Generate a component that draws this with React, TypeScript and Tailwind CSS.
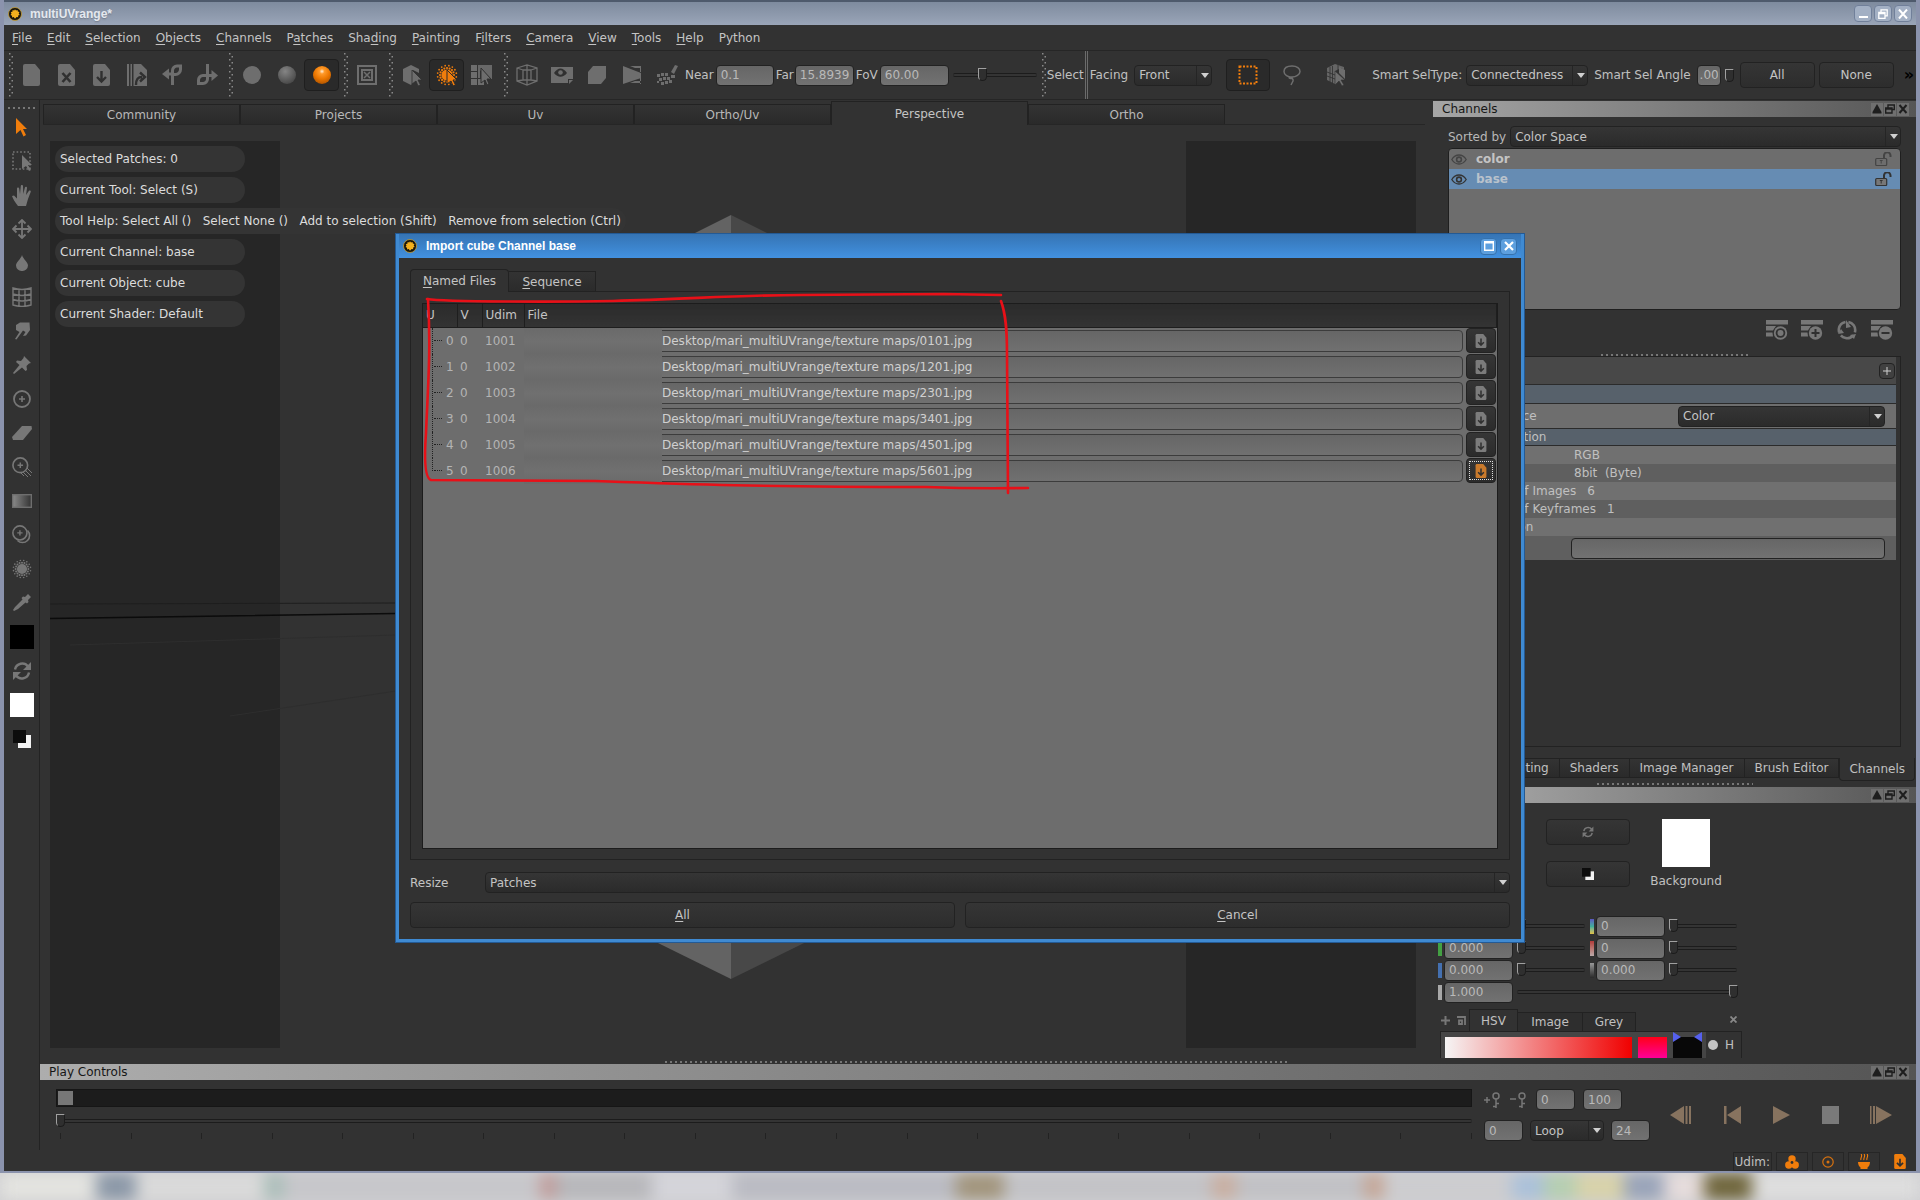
import React from "react";

type Kids = { children?: React.ReactNode };

/* ---------- small building blocks ---------- */

function Ico({ w = 22, h = 22, box = "0 0 22 22", children }: Kids & { w?: number; h?: number; box?: string }) {
  return (
    <svg width={w} height={h} viewBox={box} fill="currentColor" className="shrink-0" aria-hidden="true">
      {children}
    </svg>
  );
}

function Mn({ t, i = 0 }: { t: string; i?: number }) {
  return (
    <span>
      {t.slice(0, i)}
      <u className="underline-offset-2">{t[i]}</u>
      {t.slice(i + 1)}
    </span>
  );
}

function AppMark() {
  return (
    <svg width="14" height="14" viewBox="0 0 14 14" className="shrink-0" aria-hidden="true">
      <circle cx="7" cy="7" r="6.5" fill="#15130c" stroke="#c9a032" strokeWidth="0.8" />
      <path
        d="M7 2.2l1 1.4 1.6-.6.2 1.6 1.7.4-.8 1.5 1 1.4-1.6.7.1 1.7-1.6-.2L7 11.700l-1.300-1.600-1.700.3.100-1.700-1.600-.8 1-1.400-.8-1.500 1.700-.3.200-1.700 1.600.6z"
        fill="#f2b01e"
      />
    </svg>
  );
}

function VGrip() {
  return (
    <svg width="6" height="46" className="shrink-0" aria-hidden="true">
      <defs>
        <pattern id="vgrip" width="6" height="6" patternUnits="userSpaceOnUse">
          <rect x="1" y="1" width="1.500" height="1.500" fill="#8a8a8a" />
          <rect x="3.500" y="4" width="1.500" height="1.500" fill="#8a8a8a" />
        </pattern>
      </defs>
      <rect width="6" height="46" fill="url(#vgrip)" />
    </svg>
  );
}

function Dots({ className }: { className: string }) {
  return <div className={"h-[2px] bg-[repeating-linear-gradient(90deg,#777_0_2px,transparent_2px_5px)] " + className} />;
}

function ToolBtn({ on, label, wide, children }: Kids & { on?: boolean; label: string; wide?: boolean }) {
  return (
    <button
      aria-label={label}
      className={
        "flex h-8 shrink-0 items-center justify-center rounded-sm " +
        (wide ? "w-11 " : "w-[35px] ") +
        (on ? "border border-[#1f1f1f] bg-[#2a2a2a] text-[#f07d0c]" : "text-[#6e6e6e]")
      }
    >
      {children}
    </button>
  );
}

function Field({ value, label, className }: { value: string; label: string; className: string }) {
  return (
    <input
      aria-label={label}
      defaultValue={value}
      className={
        "h-[21px] min-w-0 shrink-0 rounded-sm border border-[#222] bg-linear-to-b from-[#666] to-[#727272] px-1 text-xs text-[#b9b9b9] outline-none " +
        className
      }
    />
  );
}

function Combo({ value, label, className }: { value: string; label: string; className: string }) {
  return (
    <div className={"relative h-[21px] min-w-0 " + className}>
      <select
        aria-label={label}
        className="block h-full w-full appearance-none rounded-sm border border-[#222] bg-linear-to-b from-[#353535] to-[#2b2b2b] pr-4 pl-1 text-xs text-[#c4c4c4] outline-none"
      >
        <option>{value}</option>
      </select>
      <div className="pointer-events-none absolute inset-y-px right-0 flex w-4 items-center justify-center border-l border-[#252525]">
        <svg width="8" height="5" viewBox="0 0 8 5" aria-hidden="true">
          <path d="M0 0h8L4 5z" fill="#d0d0d0" />
        </svg>
      </div>
    </div>
  );
}

function Slider({ value, label, className }: { value: number; label: string; className: string }) {
  return (
    <input
      type="range"
      aria-label={label}
      defaultValue={value}
      className={
        "h-4 min-w-0 appearance-none bg-transparent outline-none [&::-webkit-slider-runnable-track]:h-[4px] [&::-webkit-slider-runnable-track]:rounded-sm [&::-webkit-slider-runnable-track]:border-y [&::-webkit-slider-runnable-track]:border-[#1c1c1c] [&::-webkit-slider-runnable-track]:bg-[#343434] [&::-webkit-slider-thumb]:-mt-[6px] [&::-webkit-slider-thumb]:h-[13px] [&::-webkit-slider-thumb]:w-[9px] [&::-webkit-slider-thumb]:appearance-none [&::-webkit-slider-thumb]:rounded-b-full [&::-webkit-slider-thumb]:border [&::-webkit-slider-thumb]:border-[#1c1c1c] [&::-webkit-slider-thumb]:border-t-[#a0a0a0] [&::-webkit-slider-thumb]:border-l-[#a0a0a0] [&::-webkit-slider-thumb]:bg-[#2f2f2f] " +
        className
      }
    />
  );
}

function DarkBtn({ className, label, children }: Kids & { className: string; label?: string }) {
  return (
    <button
      aria-label={label}
      className={
        "flex items-center justify-center rounded-sm border border-[#222] bg-linear-to-b from-[#353535] to-[#2d2d2d] text-xs text-[#c4c4c4] " +
        className
      }
    >
      {children}
    </button>
  );
}

function DockBar({ title, tone }: { title: string; tone: string }) {
  return (
    <div className={"flex h-4 shrink-0 items-center justify-between pr-[7px] pl-[9px] text-xs text-[#161616] " + tone}>
      <span>{title}</span>
      <div className="flex gap-px text-[#1e1e1e]">
        <button aria-label="Collapse" className="flex h-[13px] w-3 items-center justify-center bg-[#6f6f6f]">
          <svg width="10" height="10" viewBox="0 0 10 10" fill="currentColor"><path d="M5 0l4.500 8v1.500h-9V8z" /></svg>
        </button>
        <button aria-label="Float" className="flex h-[13px] w-3 items-center justify-center bg-[#6f6f6f]">
          <svg width="10" height="10" viewBox="0 0 10 10" fill="none" stroke="currentColor" strokeWidth="1.400">
            <path d="M3 3.500V1h6.300v4.500H7.500M.7 4h6.300v5H.7zM.7 5h6.300" />
          </svg>
        </button>
        <button aria-label="Close" className="flex h-[13px] w-3 items-center justify-center bg-[#6f6f6f]">
          <svg width="10" height="10" viewBox="0 0 10 10" fill="none" stroke="currentColor" strokeWidth="2"><path d="M1.500 1l7 8M8.500 1l-7 8" /></svg>
        </button>
      </div>
    </div>
  );
}

/* ---------- icons ---------- */

const page = "M2 0h10l5 6v14a2 2 0 0 1-2 2H2a2 2 0 0 1-2-2V2a2 2 0 0 1 2-2z";

function PageIcon({ mark, w = 17, h = 22 }: { mark?: "x" | "down"; w?: number; h?: number }) {
  return (
    <Ico w={w} h={h} box="0 0 17 22">
      <path d={page} />
      {mark === "x" && <path d="M4.500 9l8 9M12.500 9l-8 9" stroke="#303030" strokeWidth="2.600" />}
      {mark === "down" && <path d="M8.500 7v10M4 13l4.500 4.500L13 13" stroke="#303030" strokeWidth="2.400" fill="none" />}
    </Ico>
  );
}

function SwapIcon({ s = 20 }: { s?: number }) {
  return (
    <Ico w={s} h={s} box="0 0 20 20">
      <path d="M3 8.500A7.300 7.300 0 0 1 16 5.500M17 11.500A7.300 7.300 0 0 1 4 14.500" fill="none" stroke="currentColor" strokeWidth="2.400" />
      <path d="M19 1v8h-8zM1 19v-8h8z" />
    </Ico>
  );
}

function MonoIcon({ s = 18 }: { s?: number }) {
  return (
    <Ico w={s} h={s} box="0 0 18 18">
      <rect x="5" y="5" width="13" height="13" fill="#f2f2f2" />
      <rect width="13" height="13" fill="#0c0c0c" />
    </Ico>
  );
}

function SplatDots({ r = 10 }: { r?: number }) {
  const dots = [];
  for (let k = 0; k < 16; k++) {
    const a = (k * Math.PI) / 8;
    dots.push(
      <g key={k}>
        <circle cx={11 + Math.cos(a) * r * 0.7} cy={11 + Math.sin(a) * r * 0.7} r="1.100" />
        <circle cx={11 + Math.cos(a + 0.2) * r * 0.95} cy={11 + Math.sin(a + 0.2) * r * 0.95} r="0.9" />
      </g>,
    );
  }
  return (
    <>
      <circle cx="11" cy="11" r={r * 0.56} />
      {dots}
    </>
  );
}

const cursor = "M11 6l10 10h-4l2.500 5-2.500 1-2-5-4 3z";

/* ---------- toolbar ---------- */

function Toolbar() {
  return (
    <div className="flex h-[50px] shrink-0 items-center overflow-hidden border-y border-[#262626] pl-1 text-xs whitespace-nowrap text-[#c0c0c0]">
      <VGrip />
      <ToolBtn label="New"><PageIcon /></ToolBtn>
      <ToolBtn label="Close project"><PageIcon mark="x" /></ToolBtn>
      <ToolBtn label="Save"><PageIcon mark="down" /></ToolBtn>
      <ToolBtn label="Export">
        <Ico w={20} h={22} box="0 0 20 22">
          <path d="M0 0h2v22H0zM3.500 0h1.500v22H3.500zM6.500 0H14l6 6v16H6.500z" />
          <path d="M9 21c0-6 2-8 6-8M13 8.500l5 4.500-5 4.500" stroke="#303030" strokeWidth="2.400" fill="none" />
        </Ico>
      </ToolBtn>
      <ToolBtn label="Import object">
        <Ico w={20} h={22} box="0 0 20 22">
          <path d="M3 10h9" stroke="currentColor" strokeWidth="3" />
          <path d="M10.500 21V6.500A4.500 4.500 0 0 1 15 2h3.500v3.500A5 5 0 0 1 13.500 10.500h-3" fill="none" stroke="currentColor" strokeWidth="3" />
          <path d="M0 10l7-5.500v11z" />
        </Ico>
      </ToolBtn>
      <ToolBtn label="Export object">
        <Ico w={22} h={22}>
          <path d="M11.500 0v15a4.500 4.500 0 0 1-4.500 4.500H2.500V16A4.500 4.500 0 0 1 7 11.500h10" fill="none" stroke="currentColor" strokeWidth="3" />
          <path d="M22 11.500L15.500 6v11z" />
        </Ico>
      </ToolBtn>
      <div className="w-1 shrink-0" />
      <VGrip />
      <ToolBtn label="Flat shading"><Ico w={18} h={18} box="0 0 18 18"><circle cx="9" cy="9" r="9" /></Ico></ToolBtn>
      <ToolBtn label="Basic shading">
        <Ico w={18} h={18} box="0 0 18 18">
          <defs>
            <radialGradient id="ballGrey" cx="0.4" cy="0.3" r="0.7"><stop offset="0" stopColor="#858585" /><stop offset="1" stopColor="#4a4a4a" /></radialGradient>
          </defs>
          <circle cx="9" cy="9" r="9" fill="url(#ballGrey)" />
        </Ico>
      </ToolBtn>
      <ToolBtn label="Full shading" on>
        <Ico w={18} h={18} box="0 0 18 18">
          <defs>
            <radialGradient id="ballHot" cx="0.5" cy="0.3" r="0.7"><stop offset="0" stopColor="#fff0dc" /><stop offset="0.2" stopColor="#ff9a2a" /><stop offset="0.6" stopColor="#ec7700" /><stop offset="1" stopColor="#b25600" /></radialGradient>
          </defs>
          <circle cx="9" cy="9" r="9" fill="url(#ballHot)" />
        </Ico>
      </ToolBtn>
      <div className="w-1 shrink-0" />
      <VGrip />
      <ToolBtn label="Frame">
        <Ico w={20} h={20} box="0 0 20 20">
          <path d="M1 1h18v18H1zM5 5h10v10H5z" fill="none" stroke="currentColor" strokeWidth="2" />
          <path d="M7 7l6 6M13 7l-6 6" stroke="currentColor" strokeWidth="1.500" />
        </Ico>
      </ToolBtn>
      <div className="w-1 shrink-0" />
      <VGrip />
      <ToolBtn label="Select object">
        <Ico>
          <path d="M10 1l8 4v4l-6-3v12l-2 3-8-4V5z" />
          <path d={cursor} stroke="#303030" strokeWidth="0.800" />
        </Ico>
      </ToolBtn>
      <ToolBtn label="Select patch" on>
        <Ico>
          <SplatDots />
          <path d={cursor} stroke="#2a2a2a" />
        </Ico>
      </ToolBtn>
      <ToolBtn label="Select face">
        <Ico>
          <path d="M0 1h6v6H0zM0 8h6v6H0zM0 15h6v6H0zM7 15h6v6H7z" />
          <path d="M7 1h14v14h-4L9 6v8H7z" opacity="0.900" />
          <path d="M10 4l10 11h-4l2 5-2 1-2-5-4 3z" stroke="#303030" />
        </Ico>
      </ToolBtn>
      <div className="w-1 shrink-0" />
      <VGrip />
      <ToolBtn label="Wireframe">
        <Ico>
          <path d="M7 6h8v10H7zM1 4l10-3 10 3v13l-10 4-10-4zM1 4l6 2M21 4l-6 2M1 17l6-1M21 17l-6-1M11 1v20" fill="none" stroke="currentColor" strokeWidth="1.300" />
        </Ico>
      </ToolBtn>
      <ToolBtn label="Visibility">
        <Ico>
          <path d="M0 3h22v12h-5v4H0z" />
          <path d="M3 9c4-6 9-6 13 0-4 5-9 5-13 0z" fill="#303030" />
          <circle cx="9.500" cy="8.500" r="2.300" />
          <path d="M18 16h4l-4 4z" />
        </Ico>
      </ToolBtn>
      <ToolBtn label="Box"><Ico w={20} h={20} box="0 0 20 20"><path d="M6 1h13v12l-5 6H1V7z" /></Ico></ToolBtn>
      <ToolBtn label="Cone">
        <Ico w={20} h={20} box="0 0 20 20">
          <path d="M1 1l18 7v5L1 19zM8 1h11v2h-6zM8 18h11v-2h-6zM18 1h1v6h-1zM18 13h1v6h-1z" />
        </Ico>
      </ToolBtn>
      <ToolBtn label="Noise">
        <Ico>
          <path d="M15 8l4-7 3 1-4 8z" />
          <path d="M1 10h3v3H1zM5 9h3v3H5zM9 9h3v3H9zM3 14h3v3H3zM7 13h3v3H7zM11 13h3v3h-3zM15 11h4v3h-4zM5 18h3v3H5zM9 17h3v3H9zM13 16h3v3h-3zM1 17h2v2H1z" />
        </Ico>
      </ToolBtn>
      <label className="flex shrink-0 items-center gap-0.5 pl-px">Near <Field label="Near" value="0.1" className="w-[58px]" /></label>
      <label className="flex shrink-0 items-center gap-px pl-0.5">Far <Field label="Far" value="15.8939" className="w-[59px]" /></label>
      <label className="flex shrink-0 items-center gap-0.5 pl-0.5">FoV <Field label="Field of view" value="60.00" className="w-[69px]" /></label>
      <Slider label="Field of view slider" value={34} className="ml-1 w-[84px] shrink-0" />
      <div className="ml-1 flex"><VGrip /></div>
      <span className="pr-px">Select</span>
      <div className="h-full w-[3px] shrink-0 border-x border-[#6b6b6b]" />
      <label className="flex shrink-0 items-center gap-1.5 pl-0.5">Facing <Combo label="Facing" value="Front" className="w-[78px]" /></label>
      <div className="w-3.5 shrink-0" />
      <ToolBtn label="Marquee" on wide>
        <Ico w={20} h={20} box="0 0 20 20"><rect x="1.500" y="1.500" width="17" height="17" fill="none" stroke="currentColor" strokeWidth="2" strokeDasharray="2 1.500" /></Ico>
      </ToolBtn>
      <ToolBtn label="Lasso" wide>
        <Ico>
          <path d="M11 2c5 0 8 2.500 8 5.500S15 13 11 13s-8-2-8-5.500S6 2 11 2zM8 12c0 3 5 1 4 5l-2 4M12 13c-1 2-4 2-4 0" fill="none" stroke="currentColor" strokeWidth="1.500" />
        </Ico>
      </ToolBtn>
      <ToolBtn label="Smart select" wide>
        <Ico>
          <path d="M2 4l8-4 9 3v3l-3-2-6 3v13L2 16z" opacity="0.850" />
          <path d="M2 8l8 3M2 12l8 3M5 3v15M7.500 2v18M13 1v8" stroke="#303030" strokeWidth="0.800" />
          <path d="M10 7l10 9h-4l3 5-2 1-3-5-4 4z" stroke="#303030" strokeWidth="0.600" />
          <path d="M14 3l6 3v9l-6-6z" />
        </Ico>
      </ToolBtn>
      <label className="ml-3.5 flex shrink-0 items-center gap-1">Smart SelType: <Combo label="Smart selection type" value="Connectedness" className="w-[122px]" /></label>
      <label className="ml-1.5 flex shrink-0 items-center gap-1.5">Smart Sel Angle <Field label="Smart selection angle" value=".00" className="w-6 !px-0.5" /></label>
      <div className="mx-1 h-[13px] w-[9px] shrink-0 rounded-b-full border border-[#1c1c1c] border-t-[#a0a0a0] border-l-[#a0a0a0] bg-[#2f2f2f]" />
      <DarkBtn className="ml-0.5 h-[26px] w-[75px] shrink-0">All</DarkBtn>
      <DarkBtn className="ml-1 h-[26px] w-[75px] shrink-0">None</DarkBtn>
      <span className="ml-auto pr-0.5 text-base font-bold text-black">»</span>
    </div>
  );
}

/* ---------- tool box ---------- */

function ToolBox() {
  const row = "flex h-[34px] w-full shrink-0 items-center justify-center text-[#777]";
  const ring = (
    <>
      <circle cx="9" cy="9" r="8" fill="none" stroke="currentColor" strokeWidth="1.800" />
      <path d="M9 6v6M6 9h6" stroke="currentColor" strokeWidth="1.600" />
    </>
  );
  return (
    <aside className="flex w-9 shrink-0 flex-col items-center border-r border-[#232323] pt-[7px]">
      <Dots className="mb-px w-7" />
      <button aria-label="Select" className={row + " !text-[#f07d0c]"}><Ico w={12} h={19} box="0 0 12 19"><path d="M0 0l11 11H7l3 6-2.500 1.500L4.500 12 0 16z" /></Ico></button>
      <button aria-label="Marquee select" className={row}>
        <Ico w={20} h={20} box="0 0 20 20">
          <rect x="1" y="1" width="17" height="17" fill="none" stroke="currentColor" strokeWidth="1.600" strokeDasharray="1.600 2" />
          <path d="M10 4l10 10h-4l3 5-2 1-3-5-4 3z" />
        </Ico>
      </button>
      <button aria-label="Pan" className={row}>
        <Ico w={20} h={21} box="0 0 20 21">
          <path d="M6 21C3 17 1 14 0 11l2-.5 3 3V3.500c0-1.500 2-1.500 2.200 0L8 9l.800-8c.200-1.400 2-1.400 2.200 0l.300 8 1.600-6.500c.4-1.400 2.200-1 2.100.4L14 10l2.800-4c1-1 2.400-.2 1.900 1L16 14l-2 7z" />
        </Ico>
      </button>
      <button aria-label="Transform" className={row}>
        <Ico w={20} h={20} box="0 0 20 20">
          <path d="M10 1v18M1 10h18" stroke="currentColor" strokeWidth="1.800" />
          <path d="M6.500 4.500L10 1l3.500 3.500M6.500 15.500L10 19l3.500-3.500M4.500 6.500L1 10l3.500 3.500M15.500 6.500L19 10l-3.500 3.500" fill="none" stroke="currentColor" strokeWidth="1.800" />
        </Ico>
      </button>
      <button aria-label="Blur" className={row}><Ico w={12} h={16} box="0 0 12 16"><path d="M6 0c1 4 6 7 6 10.500A5.700 5.700 0 0 1 6 16a5.700 5.700 0 0 1-6-5.500C0 7 5 4 6 0z" /></Ico></button>
      <button aria-label="Warp" className={row}>
        <Ico w={20} h={20} box="0 0 20 20">
          <path d="M1 1c6 2 12 2 18 0v17c-6 2-12 2-18 0zM1 7c6 2 12 2 18 0M1 12.500c6 2 12 2 18 0M7 2v17M13 2v17" fill="none" stroke="currentColor" strokeWidth="1.400" />
        </Ico>
      </button>
      <button aria-label="Smudge" className={row}>
        <Ico w={16} h={18} box="0 0 16 18"><path d="M2 3l4-2.500h9.500L16 8l-4 5.500-3 .5 2.500-4-2.500-1.500L2.500 17.500 1 17l4.500-7L2 8z" /></Ico>
      </button>
      <button aria-label="Pin" className={row}>
        <Ico w={18} h={18} box="0 0 18 18"><path d="M11 0l7 7-2 .5-2.500 2.500.5 4-1.500 1-3.500-3.500L1 18l-1-1 6.500-8L3 6l1-1.500 4 .5L10.500 2z" /></Ico>
      </button>
      <button aria-label="Clone" className={row}><Ico w={18} h={18} box="0 0 18 18">{ring}</Ico></button>
      <button aria-label="Eraser" className={row}><Ico w={20} h={14} box="0 0 20 14"><path d="M10 0h9.500l.5 3-9 11H1l-1-3z" /></Ico></button>
      <button aria-label="Towbrush" className={row}>
        <Ico w={20} h={20} box="0 0 20 20"><g transform="scale(.92)">{ring}</g><path d="M11 15l5 5M13 13l6 6M15 11l5 5M9 16l3 3" stroke="currentColor" strokeWidth="1" /></Ico>
      </button>
      <button aria-label="Gradient" className={row}>
        <Ico w={20} h={14} box="0 0 20 14">
          <defs><linearGradient id="tg"><stop offset="0" stopColor="#8a8a8a" /><stop offset="1" stopColor="#333" /></linearGradient></defs>
          <rect x="0.700" y="0.700" width="18.600" height="12.600" fill="url(#tg)" stroke="#6e6e6e" strokeWidth="1.400" />
        </Ico>
      </button>
      <button aria-label="Clone stamp" className={row}>
        <Ico w={20} h={20} box="0 0 20 20"><g transform="scale(.88)">{ring}</g><path d="M15.500 5.500a7 7 0 1 1-10 10" fill="none" stroke="currentColor" strokeWidth="1.600" /></Ico>
      </button>
      <button aria-label="Slerp" className={row}><Ico w={20} h={20}><SplatDots /></Ico></button>
      <button aria-label="Colour picker" className={row}>
        <Ico w={18} h={18} box="0 0 18 18"><path d="M12 3l3-3 3 3-3 3 .5 2-1.500 1.500-1.500-1L5 15l-4 2-1-1 2-3 7.500-7.500-1-1.500L10 2.500z" /></Ico>
      </button>
      <button aria-label="Foreground colour" className={row}><span className="size-6 bg-black" /></button>
      <button aria-label="Swap colours" className={row}><SwapIcon /></button>
      <button aria-label="Background colour" className={row}><span className="size-6 bg-white" /></button>
      <button aria-label="Reset colours" className={row}><MonoIcon /></button>
    </aside>
  );
}

/* ---------- viewport ---------- */

const viewTabs = ["Community", "Projects", "Uv", "Ortho/Uv", "Perspective", "Ortho"];
const hud = [
  "Selected Patches: 0",
  "Current Tool: Select (S)",
  "Tool Help: Select All ()   Select None ()   Add to selection (Shift)   Remove from selection (Ctrl)",
  "Current Channel: base",
  "Current Object: cube",
  "Current Shader: Default",
];

function Viewport() {
  return (
    <section className="flex min-w-0 flex-1 flex-col">
      <div className="mr-2 ml-[3px] flex h-[25px] shrink-0 items-end border-b border-[#262626]" role="tablist">
        {viewTabs.map((t) => (
          <button
            key={t}
            role="tab"
            className={
              t === "Perspective"
                ? "-mb-px h-6 w-[197px] border-x border-t border-[#222] bg-[#323232] text-xs text-[#c4c4c4]"
                : "h-5 w-[197px] border-x border-t border-[#222] bg-linear-to-b from-[#333] to-[#2a2a2a] text-xs text-[#b8b8b8]"
            }
          >
            {t}
          </button>
        ))}
      </div>
      <div className="relative mt-4 mr-[17px] mb-4 ml-[10px] flex flex-1 justify-between overflow-hidden bg-[#323232]">
        <div className="w-[230px] bg-[#262626]" />
        <div className="w-[230px] bg-[#262626]" />
        <svg className="absolute inset-0" width="100%" height="100%" aria-hidden="true">
          <path d="M0 477.500L140 475.500 346 472.500" stroke="#0b0b0b" strokeWidth="1.600" fill="none" />
          <path d="M0 463L346 462" stroke="#1e1e1e" fill="none" />
          <path d="M20 504L346 494M180 575L346 550" stroke="#2e2e2e" fill="none" />
          <path d="M681 74L541 144V769L681 838z" fill="#636363" />
          <path d="M681 74L821 144V769L681 838z" fill="#484848" />
        </svg>
        <div className="absolute top-[5px] left-[5px] flex flex-col gap-[5px]">
          {hud.map((t) => (
            <div key={t} className="flex h-[26px] min-w-[190px] items-center self-start rounded-full bg-[#343434] px-[5px] text-xs whitespace-pre text-[#dcdcdc]">
              {t}
            </div>
          ))}
        </div>
      </div>
    </section>
  );
}

/* ---------- right docks ---------- */

function Eye() {
  return (
    <Ico w={16} h={11} box="0 0 16 11">
      <path d="M.8 5.500C4.500-.5 11.500-.5 15.200 5.500 11.500 11.500 4.500 11.500.8 5.500z" fill="none" stroke="currentColor" strokeWidth="1.300" />
      <circle cx="8" cy="5.500" r="2.400" fill="none" stroke="currentColor" strokeWidth="1.600" />
    </Ico>
  );
}

function Unlock({ fill }: { fill: string }) {
  return (
    <Ico w={17} h={14} box="0 0 17 14">
      <rect x="0.700" y="6.500" width="11" height="7" rx="1" fill={fill} stroke="currentColor" strokeWidth="1.200" />
      <path d="M9 6V3.500a3 3 0 0 1 6.500 0V5" fill="none" stroke="currentColor" strokeWidth="2" />
      <path d="M6.200 8v3.500M4.800 8.500h2.800" stroke="currentColor" />
    </Ico>
  );
}

function ListIcon({ kind }: { kind: "dot" | "plus" | "minus" }) {
  return (
    <Ico w={22} h={20} box="0 0 22 20">
      <path d="M0 0h22v4.500H0zM0 6h10l-3 4.500H0zM0 12.500h6.500l.5 4H0z" />
      <circle cx="14.500" cy="13" r="7.600" fill="#323232" />
      <circle cx="14.500" cy="13" r="6.700" />
      <circle cx="14.500" cy="13" r="4.800" fill={kind === "dot" ? "#303030" : "none"} />
      {kind === "dot" && <circle cx="14.500" cy="13" r="3" />}
      {kind !== "dot" && <path d={kind === "plus" ? "M14.500 9v8M10.500 13h8" : "M10.500 13h8"} stroke="#303030" strokeWidth="2" />}
    </Ico>
  );
}

function InfoRow({ name, value, shade }: { name: string; value: string; shade: string }) {
  return (
    <div className={"flex h-[18px] items-center gap-[11px] pl-4 " + shade}>
      <span className="min-w-[98px]">{name}</span>
      <span className="whitespace-pre">{value}</span>
    </div>
  );
}

function ColorRow({ bar, value, name, wide }: { bar: string; value: string; name: string; wide?: boolean }) {
  return (
    <div className={"flex h-[22px] items-center " + (wide ? "w-[300px]" : "w-[147px]")}>
      <div className={"mr-0.5 h-[15px] w-[4px] " + bar} />
      <Field label={name} value={value} className="w-[69px]" />
      <Slider label={name + " slider"} value={wide ? 100 : 0} className="ml-1 flex-1" />
    </div>
  );
}

function RightDocks() {
  const dockTabs = ["Shaders", "Image Manager", "Brush Editor"];
  return (
    <section className="flex w-[483px] shrink-0 flex-col text-xs text-[#c0c0c0]">
      <div className="mt-px">
        <DockBar title="Channels" tone="bg-linear-to-r from-[#a6a6a6] to-[#565656]" />
      </div>
      <div className="flex min-h-0 flex-1 flex-col pt-[9px] pr-[15px] pl-[15px]">
        <label className="flex items-center gap-1 text-[#b8b8b8]">
          Sorted by <Combo label="Sorted by" value="Color Space" className="flex-1" />
        </label>
        <ul className="mt-px h-[162px] shrink-0 rounded-sm border border-[#1f1f1f] bg-[#6d6d6d] font-bold text-[#c4c4c4]">
          <li className="flex h-5 items-center pr-2 pl-0.5 text-[#444]">
            <Eye /><span className="flex-1 pl-[9px] text-[#c4c4c4]">color</span><Unlock fill="none" />
          </li>
          <li className="flex h-5 items-center bg-[#668cb3] pr-2 pl-0.5 text-[#333]">
            <Eye /><span className="flex-1 pl-[9px] text-[#b9c2cc]">base</span><Unlock fill="#777" />
          </li>
        </ul>
        <div className="mt-2.5 flex justify-end gap-[13px] pr-2 text-[#777]">
          <button aria-label="Channel settings"><ListIcon kind="dot" /></button>
          <button aria-label="Add channel"><ListIcon kind="plus" /></button>
          <button aria-label="Refresh channels">
            <Ico w={22} h={20} box="0 0 22 20">
              <circle cx="11" cy="10" r="8.200" fill="none" stroke="currentColor" strokeWidth="2.600" strokeDasharray="13.900 3.270" transform="rotate(-80 11 10)" />
              <path d="M10 0l5 7-5 1zM2 14l3-5 3 4zM20 14l-6 1 4 4z" />
            </Ico>
          </button>
          <button aria-label="Remove channel"><ListIcon kind="minus" /></button>
        </div>
        <Dots className="mt-3.5 w-[148px] self-center" />
        <div className="flex min-h-0 flex-1 flex-col border border-[#222] pr-1">
          <div className="flex h-7 shrink-0 items-center justify-end border-b border-[#2b2b2b] bg-[#484848] pr-px">
            <button aria-label="Expand" className="flex size-4 items-center justify-center rounded-sm border border-[#222] bg-[#404040]">
              <svg width="8" height="8" viewBox="0 0 8 8" stroke="#d0d0d0"><path d="M4 0v8M0 4h8" /></svg>
            </button>
          </div>
          <div className="h-[19px] shrink-0 border-b border-[#2b2b2b] bg-[#57616b]" />
          <div className="flex h-6 shrink-0 items-center bg-[#6e6e6e] pr-[11px] pl-4">
            <span className="flex-1">Color Space</span>
            <Combo label="Color Space" value="Color" className="w-[207px]" />
          </div>
          <div className="flex h-[18px] shrink-0 items-center border-y border-[#2b2b2b] bg-[#57616b] pl-7">Information</div>
          <InfoRow name="Format" value="RGB" shade="bg-[#707070]" />
          <InfoRow name="Depth" value="8bit  (Byte)" shade="bg-[#5f5f5f]" />
          <InfoRow name="Number of Images" value="6" shade="bg-[#707070]" />
          <InfoRow name="Number of Keyframes" value="1" shade="bg-[#5f5f5f]" />
          <InfoRow name="Description" value="" shade="bg-[#707070]" />
          <div className="flex h-6 shrink-0 items-center justify-end bg-[#5f5f5f] pr-[11px]">
            <Field label="Description" value="" className="w-[314px]" />
          </div>
        </div>
      </div>
      <div className="mt-[11px] flex h-[23px] shrink-0 items-start justify-end pr-px">
        <button className="h-5 border border-[#222] bg-linear-to-b from-[#333] to-[#2a2a2a] px-2.5">Painting</button>
        {dockTabs.map((t) => (
          <button key={t} className="-ml-px h-5 border border-[#222] bg-linear-to-b from-[#333] to-[#2a2a2a] px-2.5">{t}</button>
        ))}
        <button className="h-[23px] rounded-b-sm border border-t-0 border-[#222] px-[9px]">Channels</button>
      </div>
      <Dots className="my-0.5 w-[156px] self-center" />
      <DockBar title="" tone="bg-linear-to-r from-[#b0b0b0] to-[#565656]" />
      <div className="flex h-[108px] shrink-0 pt-4 pl-[113px]">
        <div className="flex flex-col gap-4">
          <DarkBtn label="Swap colours" className="h-[26px] w-[84px] !text-[#777]"><SwapIcon s={12} /></DarkBtn>
          <DarkBtn label="Reset colours" className="h-[26px] w-[84px]"><MonoIcon s={12} /></DarkBtn>
        </div>
        <div className="ml-4 flex w-20 flex-col items-center gap-1.5">
          <div className="size-12 bg-white" />
          Background
        </div>
      </div>
      <div className="flex flex-col pt-1 pl-[5px]">
        <div className="flex gap-[5px]">
          <ColorRow name="Red" bar="bg-[#b03030]" value="0.000" />
          <ColorRow name="Hue" bar="bg-linear-to-b from-[#5a55c0] via-[#3fae9a] to-[#e0c040]" value="0" />
        </div>
        <div className="flex gap-[5px]">
          <ColorRow name="Green" bar="bg-[#43a043]" value="0.000" />
          <ColorRow name="Saturation" bar="bg-linear-to-b from-[#b03a3a] to-[#b9a9a9]" value="0" />
        </div>
        <div className="flex gap-[5px]">
          <ColorRow name="Blue" bar="bg-[#4470b0]" value="0.000" />
          <ColorRow name="Value" bar="bg-linear-to-b from-[#999] to-[#2a2a2a]" value="0.000" />
        </div>
        <ColorRow name="Alpha" bar="bg-[#a8a8a8]" value="1.000" wide />
      </div>
      <div className="mt-1.5 flex h-[22px] w-[308px] shrink-0 items-end pl-2">
        <div className="flex h-full w-7 items-center gap-[7px] text-[#777]">
          <svg width="9" height="9" viewBox="0 0 9 9" stroke="currentColor" strokeWidth="2"><path d="M4.500 0v9M0 4.500h9" /></svg>
          <svg width="9" height="9" viewBox="0 0 9 9" fill="none" stroke="currentColor" strokeWidth="1.800"><path d="M0 1h8v8M2 8V4.500h3V8z" /></svg>
        </div>
        <button className="h-[22px] w-[49px] border border-b-0 border-[#222]">HSV</button>
        <button className="h-[19px] w-[65px] border border-b-0 border-l-0 border-[#222] bg-[#2e2e2e]">Image</button>
        <button className="h-[19px] w-[53px] border border-b-0 border-l-0 border-[#222] bg-[#2e2e2e]">Grey</button>
        <button aria-label="Close tab" className="mb-2 ml-auto flex pr-1 text-[#888]">
          <svg width="7" height="7" viewBox="0 0 7 7" stroke="currentColor" strokeWidth="1.800"><path d="M.5.5l6 6M6.500.5l-6 6" /></svg>
        </button>
      </div>
      <div className="mb-[6px] ml-[7px] flex h-[27px] w-[302px] shrink-0 items-end border-x border-t border-[#222]">
        <div className="flex h-full items-end gap-1.5 bg-[#454545] px-1">
          <div className="h-[21px] w-[187px] bg-linear-to-r/srgb from-[#f5f5f5] to-[#f00000]" />
          <div className="h-[21px] w-[29px] bg-linear-to-b/srgb from-[#ff0018] to-[#ff0098]" />
          <svg width="29" height="26" viewBox="0 0 29 26" aria-hidden="true">
            <path d="M0 5h29v21H0z" fill="#080808" />
            <path d="M0 0l8 5-8 5zM29 0l-8 5 8 5z" fill="#5560ee" />
          </svg>
        </div>
        <label className="flex flex-1 items-center self-center pl-0.5">
          <input type="radio" defaultChecked className="size-[10px] appearance-none rounded-full bg-[#c4c4c4]" />
          <span className="pl-[7px]">H</span>
        </label>
      </div>
    </section>
  );
}

/* ---------- play controls ---------- */

function PlayControls() {
  const ticks = Array.from({ length: 21 }, (_, i) => i);
  return (
    <section className="shrink-0 text-xs text-[#c0c0c0]">
      <DockBar title="Play Controls" tone="bg-linear-to-r from-[#adadad] to-[#555]" />
      <div className="flex h-[70px] pt-[9px] pl-4">
        <div className="min-w-0 flex-1">
          <div className="h-[18px] border border-[#161616] bg-[#1c1c1c] p-px">
            <div className="h-full w-[15px] bg-[#777]" />
          </div>
          <Slider label="Timeline" value={0} className="mt-1.5 block w-full" />
          <div className="mt-1 ml-1 flex justify-between">
            {ticks.map((i) => (<div key={i} className="h-1.5 w-px bg-[#222]" />))}
          </div>
        </div>
        <div className="ml-3 w-[166px]">
          <div className="flex items-center">
            <div className="flex w-[52px] gap-[10px] text-[#777]">
              <button aria-label="Add key"><Ico w={16} h={16} box="0 0 16 16"><path d="M0 8h6M3 5v6M12 7v9M12 14.500h-3M12 11.500h3" stroke="currentColor" strokeWidth="1.500" /><circle cx="12" cy="4" r="3" fill="none" stroke="currentColor" strokeWidth="1.500" /></Ico></button>
              <button aria-label="Remove key"><Ico w={16} h={16} box="0 0 16 16"><path d="M0 7h6M12 7v9M12 14.500h-3M12 11.500h3" stroke="currentColor" strokeWidth="1.500" /><circle cx="12" cy="4" r="3" fill="none" stroke="currentColor" strokeWidth="1.500" /></Ico></button>
            </div>
            <Field label="Start frame" value="0" className="w-[39px]" />
            <Field label="End frame" value="100" className="ml-2 w-[39px]" />
          </div>
          <div className="mt-2.5 flex justify-between">
            <Field label="Current frame" value="0" className="w-[39px]" />
            <Combo label="Playback mode" value="Loop" className="w-[74px]" />
            <Field label="Frame rate" value="24" className="w-[39px]" />
          </div>
        </div>
        <div className="mt-[15px] mr-6 ml-5 flex h-[22px] w-[222px] justify-between text-[#87735f]">
          <button aria-label="Step back"><Ico w={22} h={18} box="0 0 22 18"><path d="M0 9L14 0v18zM15.500 0h2v18h-2zM19 0h2v18h-2z" /></Ico></button>
          <button aria-label="To start"><Ico w={18} h={18} box="0 0 18 18"><path d="M0 0h2.500v18H0zM3 9L17 0v18z" /></Ico></button>
          <button aria-label="Play"><Ico w={17} h={18} box="0 0 17 18"><path d="M0 0l17 9-17 9z" /></Ico></button>
          <button aria-label="Stop" className="text-[#7a7a7a]"><Ico w={17} h={18} box="0 0 17 18"><path d="M0 0h17v18H0z" /></Ico></button>
          <button aria-label="Step forward"><Ico w={22} h={18} box="0 0 22 18"><path d="M0 0h1.500v18H0zM3 0h2v18H3zM6 0l16 9-16 9z" /></Ico></button>
        </div>
      </div>
    </section>
  );
}

function StatusBar() {
  const cell = "flex h-[19px] items-center justify-center border border-[#262626]";
  return (
    <footer className="flex h-[21px] shrink-0 items-end justify-end gap-1 text-xs text-[#c0c0c0]">
      <span className={cell + " px-px"}>Udim:</span>
      <button aria-label="Scene status" className={cell + " w-8 text-[#f07d0c]"}>
        <Ico w={14} h={14} box="0 0 14 14"><circle cx="7" cy="4" r="3.700" /><circle cx="3.800" cy="10" r="3.700" /><circle cx="10.200" cy="10" r="3.700" /><circle cx="7" cy="7.500" r="1.400" fill="#2f2f2f" /></Ico>
      </button>
      <button aria-label="Target status" className={cell + " w-8 text-[#d8720f]"}>
        <Ico w={12} h={12} box="0 0 12 12"><circle cx="6" cy="6" r="5.200" fill="none" stroke="currentColor" strokeWidth="1.200" /><circle cx="6" cy="6" r="1.500" /></Ico>
      </button>
      <button aria-label="Bake status" className={cell + " w-8 text-[#f07d0c]"}>
        <Ico w={14} h={15} box="0 0 14 15"><path d="M1 8h12c0 3-1.500 5-2.500 5.500V15h-7v-1.500C2.500 13 1 11 1 8z" /><path d="M4 0c2 2-1 4 0 6M7 0c2 2-1 4 0 6M10 0c2 2-1 4 0 6" fill="none" stroke="currentColor" strokeWidth="1.100" /></Ico>
      </button>
      <button aria-label="Save status" className="flex h-[19px] w-8 items-center justify-center text-[#f07d0c]"><PageIcon mark="down" w={12} h={15} /></button>
    </footer>
  );
}

/* ---------- import dialog ---------- */

const files = [
  ["0", "0", "1001", "0101"],
  ["1", "0", "1002", "1201"],
  ["2", "0", "1003", "2301"],
  ["3", "0", "1004", "3401"],
  ["4", "0", "1005", "4501"],
  ["5", "0", "1006", "5601"],
];

function ImportDialog() {
  const th = "h-[23px] border-r border-b border-[#1e1e1e] bg-linear-to-b from-[#2b2b2b] to-[#333] text-left font-normal text-[#c4c4c4]";
  return (
    <div
      role="dialog"
      aria-label="Import cube Channel base"
      className="absolute top-[234px] right-[396px] bottom-[258px] left-[396px] flex flex-col border-[3px] border-t-0 border-[#3f8ad2] bg-[#323232] text-xs text-[#c4c4c4] outline outline-[#245a94]"
    >
      <div className="flex h-6 shrink-0 items-center bg-linear-to-b from-[#3574b4] to-[#4291e0] pr-1 pl-[4px] font-bold text-white">
        <AppMark />
        <span className="flex-1 pl-[9px] font-['Liberation_Sans',sans-serif]">Import cube Channel base</span>
        <button aria-label="Maximise" className="mr-[3px] flex size-[17px] items-center justify-center rounded-sm border border-[#3572ae] bg-[#5d9fde]">
          <svg width="10" height="10" viewBox="0 0 10 10" fill="none" stroke="#fff" strokeWidth="1.400"><path d="M.7.7h8.600v8.600H.7zM.7 1.800h8.600" /></svg>
        </button>
        <button aria-label="Close" className="flex size-[17px] items-center justify-center rounded-sm border border-[#3572ae] bg-[#5d9fde]">
          <svg width="10" height="10" viewBox="0 0 10 10" fill="none" stroke="#fff" strokeWidth="2.200"><path d="M1 1l8 8M9 1L1 9" /></svg>
        </button>
      </div>
      <div className="flex min-h-0 flex-1 flex-col px-[11px] pt-[11px] pb-[11px]">
        <div className="flex items-end" role="tablist">
          <button role="tab" className="z-10 -mb-px h-[23px] w-[99px] rounded-t-sm border border-b-0 border-[#222] bg-[#323232] text-[#c4c4c4]"><Mn t="Named Files" /></button>
          <button role="tab" className="h-5 w-[87px] border border-b-0 border-l-0 border-[#222] bg-linear-to-b from-[#333] to-[#2b2b2b]"><Mn t="Sequence" /></button>
        </div>
        <div className="flex min-h-0 flex-1 flex-col border border-[#222] px-[11px] pt-[11px] pb-2.5">
          <div className="min-h-0 flex-1 overflow-hidden border border-[#1c1c1c] bg-[#6d6d6d]">
            <table className="w-full table-fixed border-collapse">
              <colgroup>
                <col className="w-[34px]" />
                <col className="w-[25px]" />
                <col className="w-[42px]" />
                <col />
                <col className="w-[31px]" />
              </colgroup>
              <thead>
                <tr>
                  <th className={th + " pl-[3px]"}>U</th>
                  <th className={th + " pl-[3px]"}>V</th>
                  <th className={th + " pl-[3px]"}>Udim</th>
                  <th className={th + " pl-[3px]"} colSpan={2}>File</th>
                </tr>
              </thead>
              <tbody className="text-[#b4b4b4]">
                {files.map(([u, v, udim, name], i) => (
                  <tr key={u} className="h-[26px]">
                    <td className="p-0">
                      <div className="flex h-[26px] items-center gap-px pl-[9px]">
                        <div className={"self-start border-l border-dotted border-[#222] " + (i === files.length - 1 ? "h-[13px]" : "h-[26px]")} />
                        <div className="w-2 border-t border-dotted border-[#222]" />
                        <span className="pl-[3px]">{u}</span>
                      </div>
                    </td>
                    <td className="py-0 pl-[3px]">{v}</td>
                    <td className="py-0 pl-[3px]">{udim}</td>
                    <td className="relative p-0 pr-[3px]">
                      <input
                        aria-label={"File for UDIM " + udim}
                        defaultValue={"Desktop/mari_multiUVrange/texture maps/" + name + ".jpg"}
                        className="block h-[22px] w-full rounded-sm border border-[#3c3c3c] bg-linear-to-b from-[#666] to-[#707070] pr-2 pl-[137px] text-[#d0d0d0] outline-none"
                      />
                      <div className="absolute inset-y-0 left-0 w-[138px] bg-linear-to-b from-[#6a6a6a] via-[#707070] to-[#6a6a6a]" />
                    </td>
                    <td className="p-0">
                      <button
                        aria-label={"Browse for " + udim}
                        className={
                          "flex h-[25px] w-[30px] items-center justify-center rounded-sm border border-[#222] bg-linear-to-b from-[#363636] to-[#2b2b2b] p-[2px] " +
                          (i === 5 ? "text-[#c97a2c]" : "text-[#7c7c7c]")
                        }
                      >
                        <span className={"flex size-full items-center justify-center " + (i === 5 ? "border border-dotted border-[#ddd]" : "")}>
                          <PageIcon mark="down" w={12} h={14} />
                        </span>
                      </button>
                    </td>
                  </tr>
                ))}
              </tbody>
            </table>
          </div>
        </div>
        <label className="mt-3 flex shrink-0 items-center">
          <span className="w-[75px]">Resize</span>
          <Combo label="Resize" value="Patches" className="flex-1" />
        </label>
        <div className="mt-[9px] flex shrink-0 gap-[10px]">
          <DarkBtn className="h-[26px] flex-1"><Mn t="All" /></DarkBtn>
          <DarkBtn className="h-[26px] flex-1"><Mn t="Cancel" /></DarkBtn>
        </div>
      </div>
    </div>
  );
}

/* ---------- window ---------- */

const menus: [string, number][] = [
  ["File", 0], ["Edit", 0], ["Selection", 0], ["Objects", 0], ["Channels", 0], ["Patches", 1], ["Shading", 3],
  ["Painting", 0], ["Filters", 1], ["Camera", 0], ["View", 0], ["Tools", 0], ["Help", 0], ["Python", -1],
];

export default function App() {
  const win = "flex h-[17px] w-[18px] items-center justify-center rounded-sm border border-[#71809a] bg-[#a3b0c4]";
  return (
    <div className="relative flex h-screen min-h-[900px] flex-col overflow-hidden bg-[#cfcfd2] font-['DejaVu_Sans',sans-serif]">
      <div className="flex min-h-0 flex-1 flex-col border-x-4 border-b-2 border-[#8b93ad] bg-[#323232]">
        <div className="flex h-[25px] shrink-0 items-center border-t-2 border-[#4e5a6c] bg-linear-to-b from-[#7e8b9e] to-[#9aa5b8] pr-1 pl-1">
          <AppMark />
          <span className="flex-1 pl-2 font-['Liberation_Sans',sans-serif] text-xs font-bold text-[#e4e8ee] text-shadow-sm">multiUVrange*</span>
          <div className="flex gap-0.5">
            <button aria-label="Minimise" className={win}><svg width="9" height="9" viewBox="0 0 9 9" stroke="#fff" strokeWidth="2"><path d="M0 8h9" /></svg></button>
            <button aria-label="Restore" className={win}><svg width="10" height="10" viewBox="0 0 10 10" fill="none" stroke="#fff" strokeWidth="1.300"><path d="M3 3V.8h6.200v6H7M.8 3.300H7v6H.8zM.8 4.500H7" /></svg></button>
            <button aria-label="Close" className={win}><svg width="10" height="10" viewBox="0 0 10 10" stroke="#fff" strokeWidth="2"><path d="M1 0.500l8 9M9 .5l-8 9" /></svg></button>
          </div>
        </div>
        <nav className="flex h-[25px] shrink-0 items-center gap-[15px] pl-2 text-xs text-[#c4c4c4]">
          {menus.map(([t, i]) => (
            <button key={t}>{i < 0 ? t : <Mn t={t} i={i} />}</button>
          ))}
        </nav>
        <Toolbar />
        <div className="flex min-h-0 flex-1">
          <ToolBox />
          <div className="flex min-w-0 flex-1 flex-col">
            <div className="relative flex min-h-0 flex-1">
              <Viewport />
              <RightDocks />
              <Dots className="absolute bottom-px left-1/3 w-[622px]" />
            </div>
            <PlayControls />
          </div>
        </div>
        <StatusBar />
      </div>
      <div className="h-[27px] shrink-0 overflow-hidden">
        <div className="flex h-full blur-sm">
          <div className="w-24 bg-[#e4e4e0]" />
          <div className="w-10 bg-[#8996a6]" />
          <div className="w-32 bg-[#dadada]" />
          <div className="w-5 bg-[#a9bdb8]" />
          <div className="w-64 bg-[#c6c6ca]" />
          <div className="w-4 bg-[#c09a98]" />
          <div className="w-24 bg-[#b6b6ba]" />
          <div className="w-20 bg-[#d4d4da]" />
          <div className="w-56 bg-[#b9bac2]" />
          <div className="w-12 bg-[#a0937a]" />
          <div className="w-52 bg-[#c2c2c6]" />
          <div className="w-6 bg-[#c8ad9f]" />
          <div className="w-32 bg-[#c0c0c4]" />
          <div className="w-5 bg-[#c4a494]" />
          <div className="w-32 bg-[#cccccf]" />
          <div className="w-8 bg-[#a9c0da]" />
          <div className="w-8 bg-[#b4ceb0]" />
          <div className="w-12 bg-[#d8d2a8]" />
          <div className="w-10 bg-[#97a2b8]" />
          <div className="w-10 bg-[#e6dcdc]" />
          <div className="w-12 bg-[#6d6338]" />
          <div className="flex-1 bg-[#dedede]" />
        </div>
      </div>
      <ImportDialog />
      <svg className="pointer-events-none absolute top-[290px] left-[420px]" width="620" height="210" viewBox="420 290 620 210" fill="none" stroke="#e81018" strokeWidth="2.600" strokeLinecap="round" aria-hidden="true">
        <path d="M427 299C445 302 560 302 613 301 690 299 740 295 800 295L944 294 1001 295" />
        <path d="M1001 301C1006 315 1007 330 1007 353L1008 493" />
        <path d="M428 299C431 350 428 385 426 433 424 460 425 478 431 480L595 481C680 484 760 487 926 487 980 489 1010 488 1028 488" />
      </svg>
    </div>
  );
}
